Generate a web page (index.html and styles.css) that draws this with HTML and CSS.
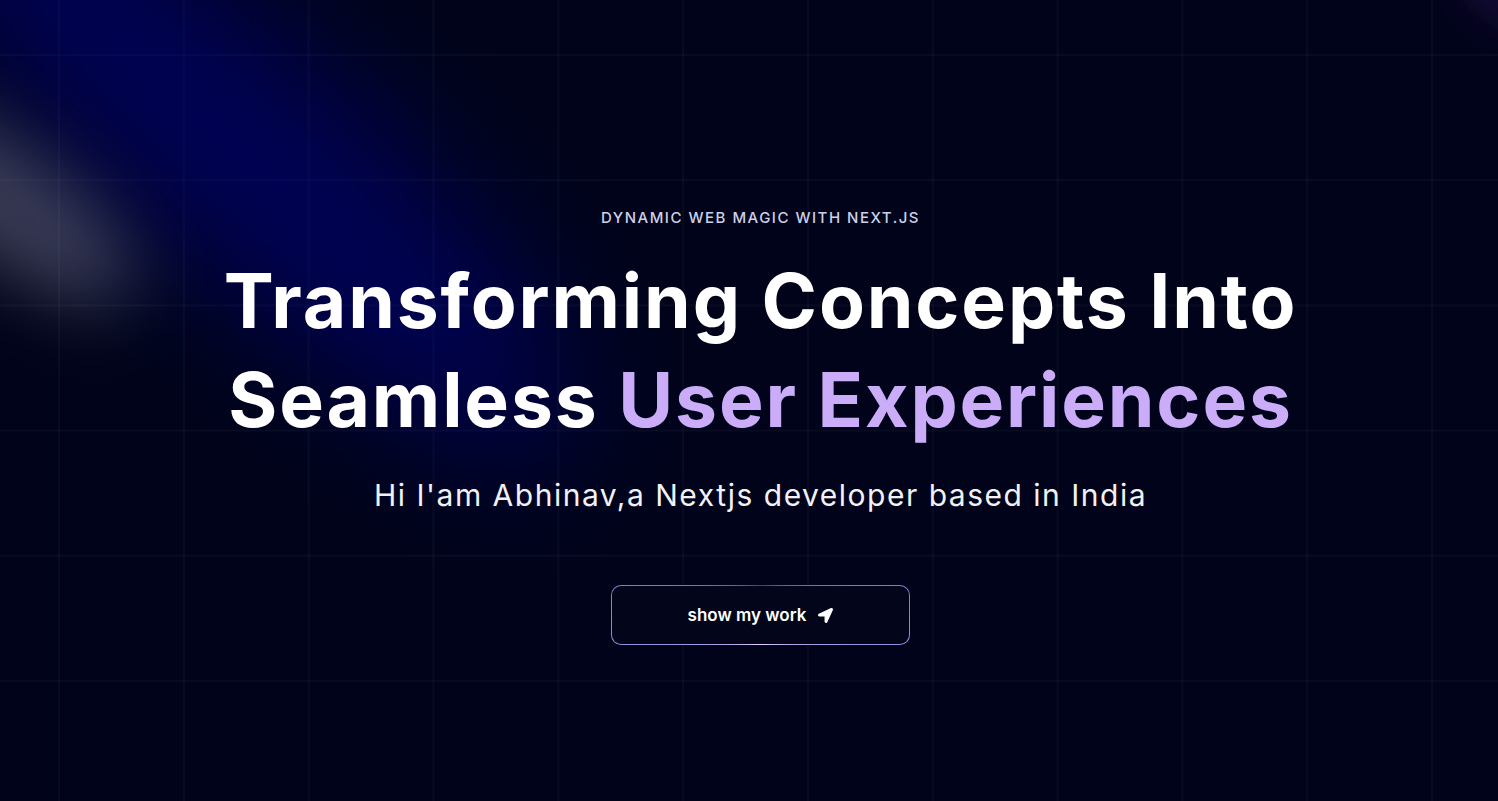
FILE: index.html
```html
<!DOCTYPE html>
<html lang="en">
<head>
<meta charset="utf-8">
<title>Abhinav — Portfolio</title>
<link rel="stylesheet" href="styles.css">
</head>
<body>
<main class="hero">
  <div class="grid"></div>
  <svg class="spotlights" viewBox="0 0 1498 801" preserveAspectRatio="none" aria-hidden="true">
    <defs>
      <filter id="blurBlue" x="-100%" y="-100%" width="300%" height="300%">
        <feGaussianBlur stdDeviation="65"/>
      </filter>
      <filter id="blurWhite" x="-100%" y="-100%" width="300%" height="300%">
        <feGaussianBlur stdDeviation="36"/>
      </filter>
      <filter id="blurPurple" x="-100%" y="-100%" width="300%" height="300%">
        <feGaussianBlur stdDeviation="25"/>
      </filter>
    </defs>
    <ellipse cx="240" cy="150" rx="440" ry="110" transform="rotate(42 240 150)" fill="#0010b0" fill-opacity="0.4" filter="url(#blurBlue)"/>
    <ellipse cx="0" cy="200" rx="160" ry="55" transform="rotate(36 0 200)" fill="#d8d8f0" fill-opacity="0.28" filter="url(#blurWhite)"/>
    <ellipse cx="1520" cy="-15" rx="70" ry="35" transform="rotate(30 1520 -15)" fill="#6a2ab0" fill-opacity="0.25" filter="url(#blurPurple)"/>
  </svg>
  <section class="content">
    <p class="eyebrow">Dynamic Web Magic with Next.js</p>
    <h1 class="title">Transforming Concepts Into<br>Seamless <span class="accent">User Experiences</span></h1>
    <p class="intro">Hi I'am Abhinav,a Nextjs developer based in India</p>
    <a class="cta" href="#about">
      <span class="cta-inner">
        show my work
        <svg class="cta-icon" viewBox="0 0 512 512" aria-hidden="true"><path d="M444.52 3.52L28.74 195.42c-47.970 22.39-31.98 92.75 19.19 92.75h175.91v175.91c0 51.17 70.36 67.17 92.75 19.190l191.9-415.78c15.99-38.39-25.59-79.97-63.97-63.97z"/></svg>
      </span>
    </a>
  </section>
</main>
</body>
</html>
```

FILE: styles.css
```css
* { box-sizing: border-box; }

html, body {
  margin: 0;
  padding: 0;
  background: #000319;
}

body {
  font-family: Inter, "Noto Sans", "Liberation Sans", sans-serif;
  color: #ffffff;
}

.hero {
  position: relative;
  height: 100vh;
  min-height: 801px;
  overflow: hidden;
  background: #000319;
}

.grid {
  position: absolute;
  inset: 0;
  background-image:
    linear-gradient(to right, rgba(255, 255, 255, 0.03) 2px, transparent 2px),
    linear-gradient(to bottom, rgba(255, 255, 255, 0.03) 2px, transparent 2px);
  background-size: 124.83px 125.2px;
  background-position: 58px 54px;
  pointer-events: none;
}

.spotlights {
  position: absolute;
  left: 0;
  top: 0;
  width: 100%;
  height: 100%;
  pointer-events: none;
}

.content {
  position: relative;
  z-index: 1;
  display: flex;
  flex-direction: column;
  align-items: center;
  padding-top: 208px;
  padding-left: 23px;
  text-align: center;
}

.eyebrow {
  margin: 0;
  font-size: 15px;
  line-height: 20px;
  letter-spacing: 0.1em;
  text-transform: uppercase;
  color: #cdd1ea;
  font-weight: 500;
}

.title {
  margin: 23px 0 0;
  font-size: 75px;
  line-height: 99px;
  font-weight: 700;
  letter-spacing: 0.025em;
  color: #ffffff;
}

.accent {
  color: #cbacf9;
}

.intro {
  margin: 28px 0 0;
  font-size: 30px;
  line-height: 36px;
  letter-spacing: 0.05em;
  color: #f1f1f6;
  font-weight: 400;
}

.cta {
  margin-top: 72px;
  display: block;
  width: 299px;
  height: 60px;
  padding: 1px;
  border-radius: 10px;
  background: conic-gradient(from 180deg at 50% 50%, #e2cbff 0%, #393bb2 50%, #e2cbff 100%);
  text-decoration: none;
}

.cta-inner {
  display: flex;
  align-items: center;
  justify-content: center;
  gap: 12px;
  width: 100%;
  height: 100%;
  border-radius: 9px;
  background: #03061a;
  color: #ffffff;
  font-size: 17px;
  font-weight: 600;
}

.cta-icon {
  width: 15px;
  height: 15px;
  fill: #ffffff;
}
```
